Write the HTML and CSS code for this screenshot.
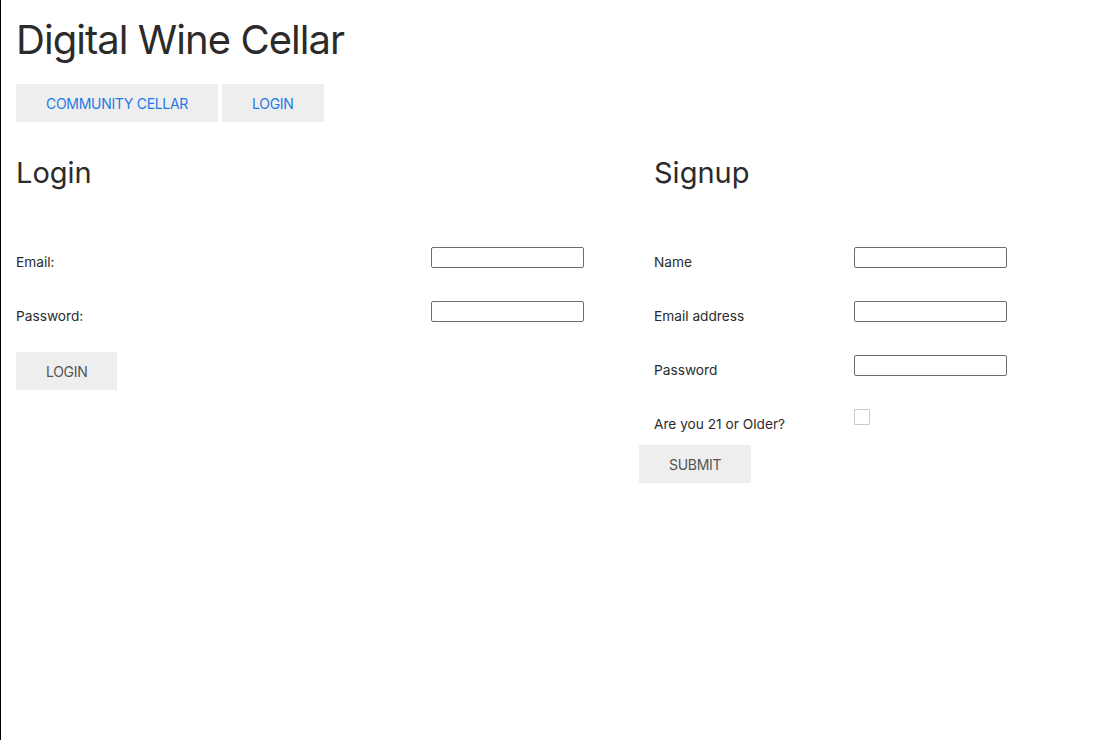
FILE: index.html
```html
<!DOCTYPE html>
<html lang="en">
<head>
<meta charset="utf-8">
<title>Digital Wine Cellar</title>
<link rel="stylesheet" href="styles.css">
</head>
<body>
<div class="page">
  <header class="header">
    <h1 class="title">Digital Wine Cellar</h1>
    <nav class="nav">
      <a class="nav-btn" href="#">Community Cellar</a>
      <a class="nav-btn" href="#">Login</a>
    </nav>
  </header>
  <main class="columns">
    <section class="col col-login">
      <h2 class="heading">Login</h2>
      <form class="form">
        <div class="row">
          <label class="label label-wide">Email:</label>
          <input class="input" type="text">
        </div>
        <div class="row">
          <label class="label label-wide">Password:</label>
          <input class="input" type="password">
        </div>
        <button class="btn btn-login" type="button">Login</button>
      </form>
    </section>
    <section class="col col-signup">
      <h2 class="heading heading-indent">Signup</h2>
      <form class="form">
        <div class="row row-indent">
          <label class="label label-narrow">Name</label>
          <input class="input" type="text">
        </div>
        <div class="row row-indent">
          <label class="label label-narrow">Email address</label>
          <input class="input" type="text">
        </div>
        <div class="row row-indent">
          <label class="label label-narrow">Password</label>
          <input class="input" type="password">
        </div>
        <div class="row row-indent row-check">
          <label class="label label-narrow">Are you 21 or Older?</label>
          <input class="check" type="checkbox">
        </div>
        <button class="btn btn-submit" type="button">Submit</button>
      </form>
    </section>
  </main>
</div>
</body>
</html>
```

FILE: styles.css
```css
* { box-sizing: border-box; }
html, body { margin: 0; padding: 0; background: #fff; }
body {
  font-family: Inter, "Noto Sans", "Liberation Sans", sans-serif;
  color: #2b2b2b;
}
.page {
  min-height: 100vh;
  border-left: 1px solid #000;
  padding-top: 16px;
}
.header { padding-left: 15px; }
.title {
  margin: 0;
  font-size: 40px;
  line-height: 48px;
  font-weight: 400;
  letter-spacing: -0.95px;
  color: #2b2b2b;
}
.nav {
  display: flex;
  gap: 4px;
  margin-top: 20px;
}
.nav-btn {
  display: flex;
  align-items: center;
  height: 38px;
  padding: 0 30px;
  background: #eeeeee;
  color: #1f7ae6;
  text-decoration: none;
  text-transform: uppercase;
  font-size: 14px;
  letter-spacing: -0.3px;
}
.columns {
  display: grid;
  grid-template-columns: 623px 1fr;
  padding-left: 15px;
}
.heading {
  margin: 34px 0 0;
  font-size: 29px;
  line-height: 34px;
  font-weight: 400;
  color: #2b2b2b;
}
.heading-indent { margin-left: 15px; }
.form {
  display: flex;
  flex-direction: column;
  align-items: flex-start;
  margin-top: 57px;
}
.row {
  display: flex;
  align-items: flex-start;
  height: 22px;
  margin-bottom: 32px;
}
.row-indent { margin-left: 15px; }
.row-check { margin-bottom: 14px; }
.label {
  padding-top: 7px;
  font-size: 13.7px;
  line-height: 16px;
  color: #2b2b2b;
}
.label-wide { width: 415px; }
.label-narrow { width: 200px; }
.input {
  width: 153px;
  height: 21px;
  margin: 0;
  border: 1px solid #6e6e6e;
  border-radius: 2px;
  background: #fff;
  font: inherit;
  font-size: 13px;
}
.check {
  appearance: none;
  -webkit-appearance: none;
  width: 16px;
  height: 16px;
  margin: 0;
  border: 1px solid #c8c8c8;
  border-radius: 1px;
  background: #fff;
}
.btn {
  height: 38px;
  padding: 0 30px;
  border: 0;
  background: #eeeeee;
  color: #555;
  font-family: inherit;
  font-size: 14px;
  letter-spacing: -0.3px;
  text-transform: uppercase;
}
.btn-login { margin-top: -3px; }
```
